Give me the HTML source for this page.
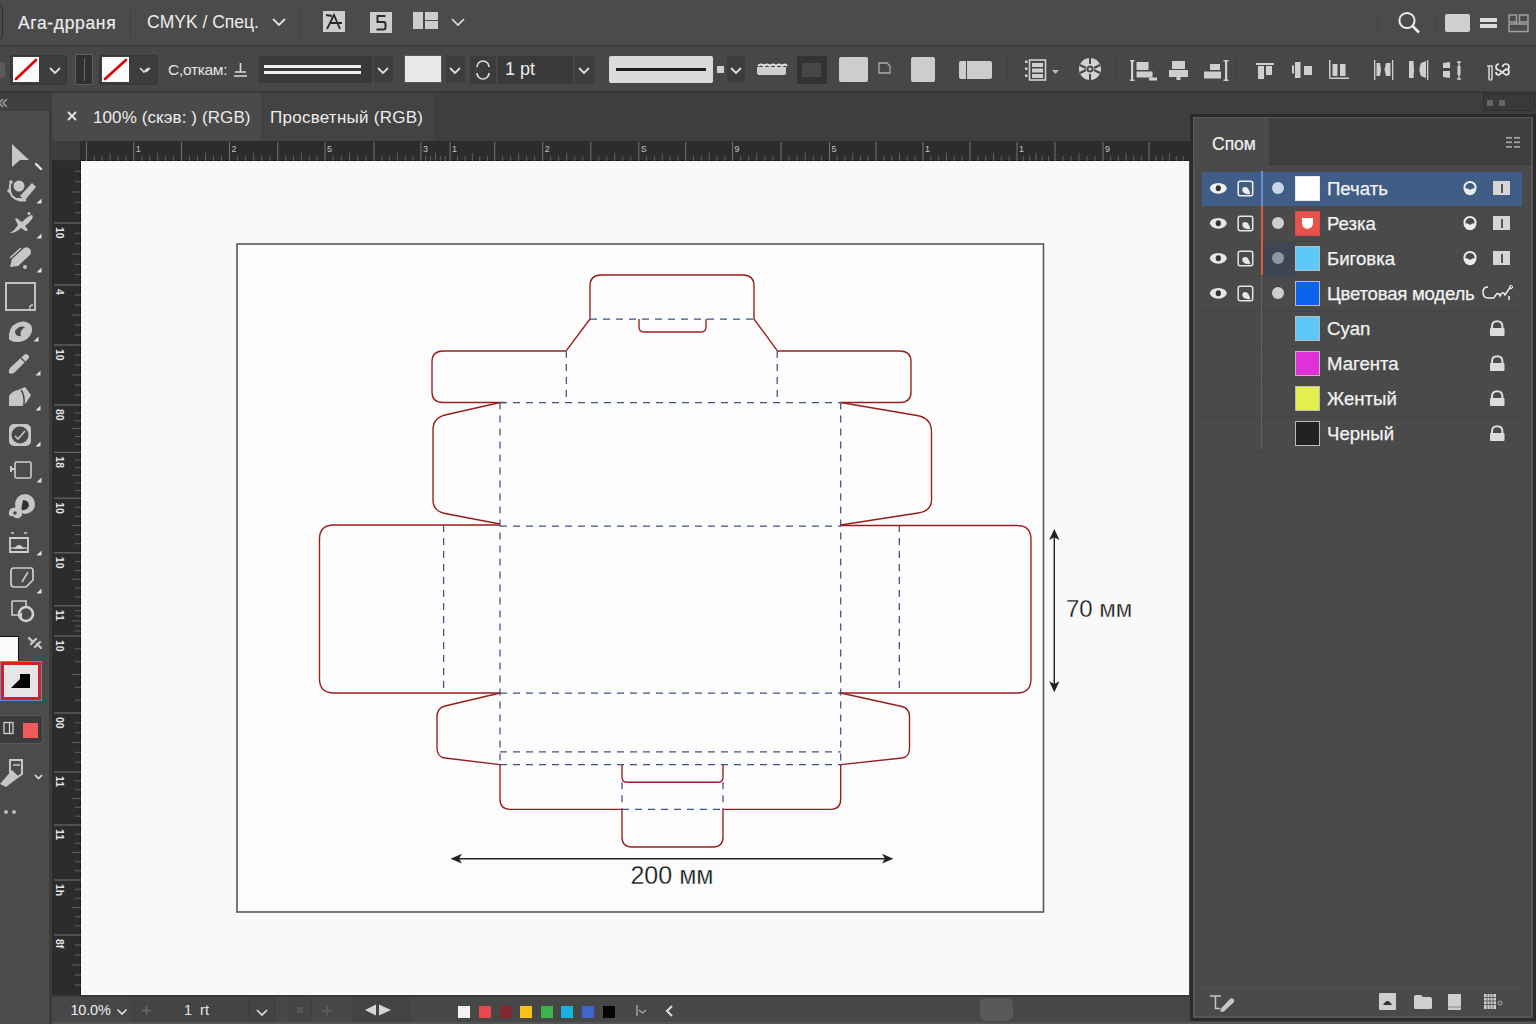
<!DOCTYPE html>
<html><head><meta charset="utf-8">
<style>
*{margin:0;padding:0;box-sizing:border-box}
html,body{width:1536px;height:1024px;overflow:hidden;background:#464646;font-family:"Liberation Sans",sans-serif;color:#e6e6e6}
.a{position:absolute}
#menubar{left:0;top:0;width:1536px;height:46px;background:#4b4b4b;border-bottom:1px solid #393939}
#ctrlbar{left:0;top:46px;width:1536px;height:47px;background:#474747;border-bottom:2px solid #383838}
#tabrow{left:52px;top:93px;width:1484px;height:48px;background:#3e3e3e}
#toolbar{left:0;top:93px;width:52px;height:931px;background:#4b4b4b;border-right:1px solid #3a3a3a}
#hruler{left:80px;top:141px;width:1110px;height:20px;background:#2c2c2c}
#rcorner{left:52px;top:141px;width:28px;height:20px;background:#3d3d3d;border-bottom:1px solid #303030}
#vruler{left:52px;top:161px;width:29px;height:834px;background:#2c2c2c}
#canvas{left:80px;top:160px;width:1109px;height:835px;background:#f9f9f9;border-left:1.5px solid #1c1c1c;border-top:1px solid #1c1c1c}
#status{left:52px;top:995px;width:1140px;height:29px;background:#474747}
#panel{left:1189.5px;top:114px;width:346px;height:907px;background:#4a4a4a;border:3px solid #2b2b2b;box-shadow:inset 0 0 0 2px #585858}
.t{position:absolute;white-space:nowrap}
</style></head><body>
<div id="menubar" class="a"></div>
<div id="ctrlbar" class="a"></div>
<!-- MENU BAR CONTENT -->
<div class="a" style="left:-6px;top:5px;width:9px;height:36px;border:1.5px solid #2f2f2f;border-radius:5px"></div>
<div class="t" style="left:18px;top:12.5px;font-size:17.5px;color:#ececec;letter-spacing:0.65px;-webkit-text-stroke:0.2px #ececec">Ага-дрраня</div>
<div class="a" style="left:130px;top:9px;width:1px;height:30px;background:#424242"></div>
<div class="t" style="left:147px;top:12px;font-size:17.5px;color:#ececec">CMYK / Спец.</div>
<svg class="a" style="left:271px;top:17px" width="16" height="10"><path d="M2,2 L8,8 L14,2" fill="none" stroke="#e0e0e0" stroke-width="1.8"/></svg>
<div class="a" style="left:300px;top:9px;width:1px;height:30px;background:#424242"></div>
<div class="a" style="left:322.5px;top:11px;width:22.5px;height:21px;background:#cdcdcd"></div>
<svg class="a" style="left:322.5px;top:11px" width="23" height="21"><path d="M4,18 L11,4 L17,18 M7,12 L19,12 M3,4 L9,5" fill="none" stroke="#2a2a2a" stroke-width="1.8"/></svg>
<div class="a" style="left:370px;top:11.5px;width:22px;height:21px;background:#cdcdcd"></div>
<svg class="a" style="left:370px;top:11.5px" width="22" height="21"><path d="M15.5,4 H7.5 V10 H13.5 Q15.5,10 15.5,12 V15.5 Q15.5,17.5 13.5,17.5 H6.5" fill="none" stroke="#2a2a2a" stroke-width="2"/></svg>
<div class="a" style="left:413px;top:12px;width:10px;height:17px;background:#cdcdcd"></div>
<div class="a" style="left:425px;top:12px;width:12.5px;height:7.5px;background:#cdcdcd"></div>
<div class="a" style="left:425px;top:20.5px;width:12.5px;height:8.5px;background:#cdcdcd"></div>
<svg class="a" style="left:450px;top:17px" width="16" height="10"><path d="M2,2 L8,8 L14,2" fill="none" stroke="#e0e0e0" stroke-width="1.6"/></svg>
<div class="a" style="left:1377px;top:12px;width:1px;height:23px;background:#444"></div>
<svg class="a" style="left:1394px;top:8px" width="30" height="30"><circle cx="13" cy="12.5" r="7.6" fill="none" stroke="#ececec" stroke-width="2"/><path d="M18.5,18 L25,24.5" stroke="#ececec" stroke-width="2.6"/></svg>
<div class="a" style="left:1435px;top:12px;width:1px;height:23px;background:#444"></div>
<div class="a" style="left:1444.5px;top:13.5px;width:25.5px;height:18px;background:#cfcfcf;border-radius:2px"></div>
<div class="a" style="left:1480px;top:18px;width:17px;height:3.5px;background:#dcdcdc"></div>
<div class="a" style="left:1480px;top:24px;width:17px;height:3.5px;background:#dcdcdc"></div>
<svg class="a" style="left:1507px;top:13px" width="24" height="20"><path d="M2,2 H9.5 V9 H2 Z M12.5,2 H21 V9 H12.5 Z M2,11 H21 V18.5 H2 Z M9.5,9 V11 M12.5,9 V11" fill="none" stroke="#a0a0a0" stroke-width="1.5"/></svg>

<div id="toolbar" class="a"></div>
<!-- CONTROL BAR CONTENT -->
<div class="a" style="left:0;top:62px;width:5px;height:16px;background:#5a5a5a;border-radius:0 3px 3px 0"></div>
<div class="a" style="left:10px;top:55px;width:57px;height:30px;background:#3d3d3d;border:1px solid #373737;border-radius:2px"></div>
<div class="a" style="left:13px;top:57px;width:26px;height:25px;background:#fbfbfb"></div>
<svg class="a" style="left:13px;top:57px" width="26" height="25"><path d="M3,22 L23,3" stroke="#e00000" stroke-width="2.6" stroke-linecap="round"/></svg>
<svg class="a" style="left:48px;top:66px" width="14" height="9"><path d="M2,2 L7,7 L12,2" fill="none" stroke="#dedede" stroke-width="1.8"/></svg>
<div class="a" style="left:75px;top:54px;width:18px;height:31px;background:#2f2f2f;border:1px solid #5e5e5e"></div>
<div class="a" style="left:84px;top:58px;width:1px;height:23px;background:#6a6a6a"></div>
<div class="a" style="left:99px;top:55px;width:59px;height:30px;background:#3d3d3d;border:1px solid #373737;border-radius:2px"></div>
<div class="a" style="left:102px;top:57px;width:27px;height:25px;background:#fbfbfb"></div>
<svg class="a" style="left:102px;top:57px" width="27" height="25"><path d="M3,22 L24,3" stroke="#e00000" stroke-width="2.6" stroke-linecap="round"/></svg>
<svg class="a" style="left:138px;top:66px" width="16" height="9"><path d="M2,2 L6,6 L10,2 M8,6 L12,2" fill="none" stroke="#dedede" stroke-width="1.6"/></svg>
<div class="t" style="left:168px;top:61px;font-size:15.5px;color:#e4e4e4;letter-spacing:-0.3px">С,откам:</div>
<svg class="a" style="left:232px;top:61px" width="17" height="17"><path d="M8.5,2 V11 M3,11 H14 M2,15 H15" fill="none" stroke="#dcdcdc" stroke-width="1.6"/></svg>
<div class="a" style="left:259px;top:56px;width:112.5px;height:27px;background:#393939"></div>
<div class="a" style="left:264px;top:65px;width:97px;height:3px;background:#f0f0f0"></div>
<div class="a" style="left:264px;top:70.5px;width:97px;height:3px;background:#f0f0f0"></div>
<div class="a" style="left:374px;top:56px;width:18.5px;height:27px;background:#3d3d3d"></div>
<svg class="a" style="left:376px;top:66px" width="14" height="9"><path d="M2,2 L7,7 L12,2" fill="none" stroke="#dedede" stroke-width="1.8"/></svg>
<div class="a" style="left:404px;top:55px;width:38px;height:28px;background:#e8e8e8;border:1px solid #5a5a5a"></div>
<div class="a" style="left:446px;top:56px;width:19px;height:27px;background:#3d3d3d"></div>
<svg class="a" style="left:448px;top:66px" width="14" height="9"><path d="M2,2 L7,7 L12,2" fill="none" stroke="#dedede" stroke-width="1.8"/></svg>
<div class="a" style="left:470px;top:56px;width:25.5px;height:27.5px;background:#3c3c3c"></div>
<svg class="a" style="left:470px;top:56px" width="26" height="28"><path d="M7,11 A6,6 0 0 1 19,11 M7,17 A6,6 0 0 0 19,17" fill="none" stroke="#dcdcdc" stroke-width="1.7"/></svg>
<div class="a" style="left:498px;top:56px;width:75px;height:27.5px;background:#3a3a3a"></div>
<div class="t" style="left:505px;top:59px;font-size:18px;color:#ececec">1 pt</div>
<div class="a" style="left:575px;top:56px;width:19px;height:27.5px;background:#3d3d3d;border-radius:0 2px 2px 0"></div>
<svg class="a" style="left:577px;top:66px" width="14" height="9"><path d="M2,2 L7,7 L12,2" fill="none" stroke="#dedede" stroke-width="1.8"/></svg>
<div class="a" style="left:608.5px;top:56px;width:104.5px;height:27px;background:#dadada;border-radius:2px"></div>
<div class="a" style="left:616px;top:68px;width:90px;height:3px;background:#1e1e1e"></div>
<div class="a" style="left:717px;top:66px;width:7px;height:7px;background:#cfcfcf"></div>
<div class="a" style="left:727px;top:56px;width:18px;height:27px;background:#3c3c3c"></div>
<svg class="a" style="left:729px;top:66px" width="14" height="9"><path d="M2,2 L7,7 L12,2" fill="none" stroke="#dedede" stroke-width="1.8"/></svg>
<svg class="a" style="left:755px;top:61px" width="34" height="16"><path d="M2,6 H31 V12 Q31,14 29,14 H4 Q2,14 2,12 Z" fill="#cfcfcf"/><path d="M3,5 Q6,2 9,5 Q12,2 15,5 Q18,2 21,5 Q24,2 27,5 Q30,2 32,5" fill="none" stroke="#e6e6e6" stroke-width="2"/></svg>
<div class="a" style="left:796.5px;top:56px;width:30.5px;height:27.5px;background:#333333"></div>
<div class="a" style="left:802px;top:62.5px;width:19px;height:14.5px;background:#474747"></div>
<div class="a" style="left:839px;top:57px;width:29px;height:25px;background:#cdcdcd;border-radius:2px"></div>
<svg class="a" style="left:877px;top:61px" width="16" height="14"><path d="M2,2 H10 L13,5 V12 H2 Z" fill="none" stroke="#aaa" stroke-width="1.3"/></svg>
<div class="a" style="left:911px;top:57px;width:24px;height:25px;background:#cdcdcd;border-radius:2px"></div>
<div class="a" style="left:959px;top:60.5px;width:32.5px;height:18.5px;background:#cdcdcd;border-radius:2px"></div>
<div class="a" style="left:966px;top:61px;width:1.2px;height:18px;background:#474747"></div>
<div class="a" style="left:1006.5px;top:56px;width:1px;height:28px;background:#404040"></div>
<svg class="a" style="left:1024px;top:59px" width="38" height="23"><g fill="#cfcfcf"><rect x="1" y="1.5" width="2.5" height="2.5"/><rect x="1" y="8.5" width="2.5" height="2.5"/><rect x="1" y="15.5" width="2.5" height="2.5"/></g><rect x="5.5" y="1" width="16" height="20" fill="none" stroke="#cfcfcf" stroke-width="1.6"/><g fill="#cfcfcf"><rect x="8" y="4" width="11" height="4"/><rect x="8" y="9.5" width="11" height="4"/><rect x="8" y="15" width="11" height="4"/></g><path d="M28,11 L35,11 L31.5,15 Z" fill="#bdbdbd"/></svg>
<svg class="a" style="left:1078px;top:57px" width="24" height="24"><circle cx="12" cy="12" r="11" fill="#d2d2d2"/><g stroke="#474747" stroke-width="2" fill="none"><path d="M12,1 V7 M12,17 V23 M2,8 L8,11 M16,13 L22,16 M2,16 L8,13 M16,11 L22,8"/></g><circle cx="12" cy="12" r="3.5" fill="#474747"/><circle cx="12" cy="12" r="1.5" fill="#d2d2d2"/></svg>
<div class="a" style="left:1115.5px;top:58px;width:1px;height:24px;background:#404040"></div>
<svg class="a" style="left:1130px;top:59px" width="30" height="23"><g fill="#cfcfcf"><rect x="1" y="1" width="2.2" height="21"/><rect x="0" y="1" width="4.5" height="1.5"/><rect x="0" y="20.5" width="4.5" height="1.5"/><rect x="6.5" y="3" width="12" height="8"/><rect x="6.5" y="12.5" width="16" height="6"/><rect x="19" y="18.5" width="8" height="3"/></g></svg>
<svg class="a" style="left:1168px;top:60px" width="22" height="22"><g fill="#cfcfcf"><rect x="4" y="1" width="13" height="8"/><rect x="1" y="10" width="19" height="7"/><rect x="8.5" y="17" width="4" height="3"/></g></svg>
<svg class="a" style="left:1203px;top:59px" width="26" height="23"><g fill="#cfcfcf"><rect x="22" y="1" width="2.2" height="21"/><rect x="20.5" y="1" width="5" height="1.5"/><rect x="20.5" y="20.5" width="5" height="1.5"/><rect x="7" y="5" width="10" height="6"/><rect x="1" y="12.5" width="17" height="7"/></g></svg>
<div class="a" style="left:1236px;top:57px;width:1px;height:26px;background:#404040"></div>
<svg class="a" style="left:1256px;top:63px" width="20" height="17"><g fill="#cfcfcf"><rect x="0" y="0" width="18" height="2"/><rect x="2" y="3" width="6" height="13"/><rect x="10" y="3" width="6" height="9"/></g></svg>
<svg class="a" style="left:1292px;top:62px" width="22" height="17"><g fill="#cfcfcf"><rect x="0" y="3.5" width="2" height="8"/><rect x="3" y="0" width="5.5" height="16"/><rect x="12" y="4" width="8" height="9"/></g></svg>
<svg class="a" style="left:1328px;top:59px" width="22" height="21"><g fill="#cfcfcf"><rect x="1" y="1" width="1.5" height="17"/><rect x="1" y="18.5" width="20" height="1.5"/><rect x="4.5" y="5" width="5" height="12"/><rect x="12" y="5" width="5.5" height="12"/></g></svg>
<div class="a" style="left:1361.5px;top:58px;width:1px;height:24px;background:#404040"></div>
<svg class="a" style="left:1373px;top:59px" width="22" height="22"><g fill="#cfcfcf"><rect x="1" y="1" width="1.3" height="20"/><rect x="19" y="1" width="1.3" height="20"/><path d="M3.5,4 H7 L8,10.5 L7,17 H3.5 Z"/><path d="M17.5,4 H13 L11.5,10.5 L13,17 H17.5 Z"/></g></svg>
<svg class="a" style="left:1408px;top:59px" width="22" height="22"><g fill="#cfcfcf"><path d="M1,2 H5.5 Q6.5,10.5 5.5,19 H1 Z"/><path d="M18,2 L18,19 L13,17 Q10,10.5 13,4 Z"/><rect x="19" y="1" width="1.3" height="20"/></g></svg>
<svg class="a" style="left:1441px;top:60px" width="24" height="21"><g fill="#cfcfcf"><path d="M2,3 L9,2 V8 H2 Z"/><path d="M2,11 H9 V18 L2,17 Z"/></g><path d="M18,2 V19 M16,2 H20 M16,19 H20" fill="none" stroke="#cfcfcf" stroke-width="1.4"/><rect x="16.5" y="6" width="3" height="9" fill="#cfcfcf"/></svg>
<svg class="a" style="left:1484px;top:61px" width="28" height="20"><path d="M3,5 H8 V17 M5,5 V18 Q5,19 6.5,19 Q8,19 8,17" fill="none" stroke="#cfcfcf" stroke-width="1.6"/><path d="M15,3 Q12,3 12,6 Q12,9 15,9 L22,14 Q25,14 25,11 Q25,8 22,8 L15,14 Q12,14 12,11 M22,9 Q25,9 25,6 Q25,3 22,3 Q19,3 18.5,6" fill="none" stroke="#e6e6e6" stroke-width="1.7"/></svg>


<!-- TOOLBAR CONTENT -->
<div class="a" style="left:49px;top:111px;width:3px;height:913px;background:#3c3c3c"></div>
<svg class="a" style="left:10px;top:142px" width="22" height="28"><path d="M2,2 L19,18 L10,18 L2,25 Z" fill="#c6c6c6"/></svg>
<svg class="a" style="left:35px;top:163px" width="8" height="7"><path d="M1,1 L6,6" stroke="#e6e6e6" stroke-width="2.4" stroke-linecap="round"/></svg>
<svg class="a" style="left:6px;top:178px" width="32" height="26"><circle cx="13" cy="8" r="5.5" fill="#c6c6c6"/><path d="M14,18 L26,5 L30,9 L19,22 Z" fill="#c6c6c6"/><path d="M5,4 Q2,12 6,18 Q12,24 20,22" fill="none" stroke="#c6c6c6" stroke-width="2"/><circle cx="5" cy="4" r="1.8" fill="#c6c6c6"/><circle cx="3" cy="13" r="1.8" fill="#c6c6c6"/><path d="M10,20 Q15,24 21,20 Z" fill="#c6c6c6"/></svg>
<svg class="a" style="left:36px;top:198px" width="6" height="6"><path d="M5.5,0.5 V5.5 H0.5 Z" fill="#e0e0e0"/></svg>
<svg class="a" style="left:9px;top:211px" width="26" height="25"><path d="M1,22 Q6,19 9,14 L6,8 Q8,6 10,9 L13,11 Q18,6 22,4 Q25,4 23,8 Q20,12 16,15 L19,19 Q17,21 15,19 L12,17 Q7,22 1,22 Z" fill="#c6c6c6"/><circle cx="20" cy="2.5" r="1.5" fill="#c6c6c6"/></svg>
<svg class="a" style="left:36px;top:233px" width="6" height="6"><path d="M5.5,0.5 V5.5 H0.5 Z" fill="#e0e0e0"/></svg>
<svg class="a" style="left:8px;top:245px" width="26" height="26"><path d="M2,22 L4,14 L16,3 Q19,1 22,4 Q24,7 22,10 L10,21 Z" fill="#c6c6c6"/><path d="M2,13 L13,3" stroke="#c6c6c6" stroke-width="1.6"/><circle cx="17" cy="22" r="2" fill="#c6c6c6"/></svg>
<svg class="a" style="left:36px;top:267px" width="6" height="6"><path d="M5.5,0.5 V5.5 H0.5 Z" fill="#e0e0e0"/></svg>
<svg class="a" style="left:5px;top:282px" width="32" height="30"><rect x="1" y="1" width="29" height="27" fill="none" stroke="#cfcfcf" stroke-width="1.8"/><path d="M25,27 Q24,23 28,23" fill="none" stroke="#cfcfcf" stroke-width="1.3"/></svg>
<svg class="a" style="left:7px;top:317px" width="30" height="28"><path d="M2,22 Q1,10 10,6 Q18,2 24,8 Q27,14 22,20 Q18,25 10,25 Q4,25 2,22 Z" fill="#c6c6c6"/><path d="M8,14 Q12,8 18,10 Q12,14 14,19 Q8,20 8,14 Z" fill="#484848"/></svg>
<svg class="a" style="left:33px;top:336px" width="6" height="6"><path d="M5.5,0.5 V5.5 H0.5 Z" fill="#e0e0e0"/></svg>
<svg class="a" style="left:7px;top:352px" width="24" height="24"><path d="M2,21 Q1,18 4,15 L17,3 Q19,1 21,3 Q23,5 21,7 L8,20 Q5,23 2,21 Z" fill="#c6c6c6"/><path d="M14,6 L18,10" stroke="#484848" stroke-width="1.3"/></svg>
<svg class="a" style="left:35px;top:370px" width="6" height="6"><path d="M5.5,0.5 V5.5 H0.5 Z" fill="#e0e0e0"/></svg>
<svg class="a" style="left:8px;top:386px" width="24" height="22"><path d="M1,20 V10 Q4,5 10,4 L17,1 L23,9 L18,17 L14,20 Z" fill="#c6c6c6"/><path d="M13,4 Q17,9 16,19" fill="none" stroke="#484848" stroke-width="1.5"/></svg>
<svg class="a" style="left:35px;top:405px" width="6" height="6"><path d="M5.5,0.5 V5.5 H0.5 Z" fill="#e0e0e0"/></svg>
<svg class="a" style="left:8px;top:423px" width="24" height="24"><rect x="1" y="1" width="22" height="22" rx="5" fill="#c6c6c6"/><circle cx="12" cy="12" r="8.5" fill="#484848"/><path d="M7,13 L10,16 L17,8" fill="none" stroke="#c6c6c6" stroke-width="1.6"/></svg>
<svg class="a" style="left:35px;top:441px" width="6" height="6"><path d="M5.5,0.5 V5.5 H0.5 Z" fill="#e0e0e0"/></svg>
<svg class="a" style="left:8px;top:460px" width="26" height="22"><rect x="7" y="2" width="16" height="16" rx="1.5" fill="none" stroke="#cfcfcf" stroke-width="1.6"/><path d="M2,9 H7 M3,6 V12" stroke="#cfcfcf" stroke-width="1.8"/></svg>
<svg class="a" style="left:36px;top:477px" width="6" height="6"><path d="M5.5,0.5 V5.5 H0.5 Z" fill="#e0e0e0"/></svg>
<svg class="a" style="left:7px;top:492px" width="30" height="28"><circle cx="18" cy="12" r="10" fill="#c6c6c6"/><path d="M16,8 Q22,8 22,14 Q20,19 14,18 Z" fill="#333"/><path d="M2,20 Q3,15 8,16 Q9,12 13,14 Q16,16 14,20 Q17,24 12,26 Q8,27 6,24 Q1,25 2,20 Z" fill="#c6c6c6"/><circle cx="8" cy="21" r="1.8" fill="#484848"/></svg>
<svg class="a" style="left:8px;top:530px" width="24" height="24"><path d="M2,8 H20 V22 H2 Z" fill="none" stroke="#cfcfcf" stroke-width="1.8"/><path d="M3,3 H6 M16,3 H19" stroke="#cfcfcf" stroke-width="1.5"/><path d="M6,19 Q11,11 16,19 Z" fill="#cfcfcf"/><path d="M3,18 H19" stroke="#cfcfcf" stroke-width="1.3"/></svg>
<svg class="a" style="left:36px;top:550px" width="6" height="6"><path d="M5.5,0.5 V5.5 H0.5 Z" fill="#e0e0e0"/></svg>
<svg class="a" style="left:9px;top:566px" width="26" height="23"><path d="M2,5 Q2,2 5,2 H22 Q24,2 24,5 V14 L17,21 H5 Q2,21 2,18 Z" fill="none" stroke="#cfcfcf" stroke-width="1.7"/><path d="M13,16 L19,6" stroke="#cfcfcf" stroke-width="1.5"/></svg>
<svg class="a" style="left:36px;top:588px" width="6" height="6"><path d="M5.5,0.5 V5.5 H0.5 Z" fill="#e0e0e0"/></svg>
<svg class="a" style="left:10px;top:599px" width="26" height="24"><path d="M2,2 H16 V9 M2,2 V16 H8" fill="none" stroke="#cfcfcf" stroke-width="1.6"/><circle cx="16" cy="15" r="7" fill="none" stroke="#cfcfcf" stroke-width="2.6"/><path d="M8,17 L12,13 L12,20 Z" fill="#cfcfcf"/></svg>
<svg class="a" style="left:27px;top:636px" width="16" height="14"><path d="M2,2 L6,6 M10,8 L14,12 M9,3 L4,8 M13,6 L8,11" stroke="#c6c6c6" stroke-width="2.4" stroke-linecap="round"/></svg>
<div class="a" style="left:-2px;top:636px;width:21px;height:34px;background:#fbfbfb;border:1.5px solid #111"></div>
<div class="a" style="left:0px;top:660.5px;width:41.5px;height:40.5px;background:#d32020;border:1px solid #5a8fd8"></div>
<div class="a" style="left:4px;top:664.5px;width:33.5px;height:32.5px;background:#e6e6e6"></div>
<svg class="a" style="left:9px;top:671px" width="24" height="20"><path d="M2,17 L11,8 L11,3 L21,3 L21,17 Z" fill="#050505"/></svg>
<div class="a" style="left:-2px;top:715px;width:44.5px;height:28.5px;background:#3b3b3b;border:1px solid #5a5a5a;border-radius:2px"></div>
<svg class="a" style="left:3px;top:721px" width="12" height="14"><rect x="1" y="1.5" width="9" height="11" fill="none" stroke="#cfcfcf" stroke-width="1.3"/><path d="M6.5,1.5 V12.5" stroke="#cfcfcf" stroke-width="1.3"/></svg>
<div class="a" style="left:23px;top:723px;width:14.5px;height:14.5px;background:#ee5b5b"></div>
<svg class="a" style="left:0px;top:756px" width="26" height="32"><path d="M0,28 L12,14 L19,21 L6,31 Z" fill="#c6c6c6"/><path d="M10,4 H22 V18 L16,22 L10,16 Z" fill="none" stroke="#c6c6c6" stroke-width="2"/><path d="M13,9 H20" stroke="#c6c6c6" stroke-width="1.5"/></svg>
<svg class="a" style="left:34px;top:774px" width="9" height="6"><path d="M1,1 L4.5,4.5 L8,1" fill="none" stroke="#ddd" stroke-width="1.6"/></svg>
<div class="a" style="left:4px;top:810px;width:4px;height:4px;border-radius:50%;background:#bbb"></div>
<div class="a" style="left:12px;top:810px;width:4px;height:4px;border-radius:50%;background:#bbb"></div>

<div id="tabrow" class="a"></div>
<!-- TAB ROW CONTENT -->
<div class="a" style="left:0;top:93px;width:52px;height:18px;background:#3f3f3f"></div>
<svg class="a" style="left:-4px;top:97px" width="12" height="12"><path d="M7,2 L3,6 L7,10 M11,2 L7,6 L11,10" fill="none" stroke="#999" stroke-width="1.6"/></svg>
<div class="a" style="left:52px;top:93px;width:209px;height:48px;background:#4a4a4a"></div>
<div class="a" style="left:261px;top:93px;width:173px;height:48px;background:#434343"></div>
<svg class="a" style="left:66px;top:110px" width="12" height="12"><path d="M2,2 L10,10 M10,2 L2,10" stroke="#e8e8e8" stroke-width="1.8"/></svg>
<div class="t" style="left:93px;top:108px;font-size:17px;color:#ececec;letter-spacing:0.1px">100% (скэв: ) (RGB)</div>
<div class="t" style="left:270px;top:108px;font-size:17px;color:#ececec;letter-spacing:0.25px">Просветный (RGB)</div>
<div class="a" style="left:1483px;top:93px;width:51.5px;height:18px;background:#393939;border:1px solid #2f2f2f;border-radius:0 0 4px 0"></div>
<div class="a" style="left:1487px;top:100px;width:6px;height:6px;background:#666"></div>
<div class="a" style="left:1499px;top:100px;width:6px;height:6px;background:#666"></div>

<div id="rcorner" class="a"></div>
<div id="hruler" class="a"></div>
<div id="vruler" class="a"></div>
<div id="canvas" class="a"></div>
<svg class="a" style="left:0;top:0" width="1536" height="1024"><g stroke="#757575" stroke-width="1">
<path d="M86.4,142 V161"/>
<path d="M94.3,156 V161" stroke="#606060"/>
<path d="M102.2,156 V161" stroke="#606060"/>
<path d="M110.1,153 V161" stroke="#606060"/>
<path d="M118.0,156 V161" stroke="#606060"/>
<path d="M125.9,156 V161" stroke="#606060"/>
<path d="M133.8,142 V161"/>
<path d="M141.8,156 V161" stroke="#606060"/>
<path d="M149.7,156 V161" stroke="#606060"/>
<path d="M157.7,153 V161" stroke="#606060"/>
<path d="M165.6,156 V161" stroke="#606060"/>
<path d="M173.6,156 V161" stroke="#606060"/>
<path d="M181.5,142 V161"/>
<path d="M189.5,156 V161" stroke="#606060"/>
<path d="M197.5,156 V161" stroke="#606060"/>
<path d="M205.5,153 V161" stroke="#606060"/>
<path d="M213.5,156 V161" stroke="#606060"/>
<path d="M221.5,156 V161" stroke="#606060"/>
<path d="M229.5,142 V161"/>
<path d="M237.6,156 V161" stroke="#606060"/>
<path d="M245.6,156 V161" stroke="#606060"/>
<path d="M253.7,153 V161" stroke="#606060"/>
<path d="M261.7,156 V161" stroke="#606060"/>
<path d="M269.8,156 V161" stroke="#606060"/>
<path d="M277.8,142 V161"/>
<path d="M285.7,156 V161" stroke="#606060"/>
<path d="M293.5,156 V161" stroke="#606060"/>
<path d="M301.4,153 V161" stroke="#606060"/>
<path d="M309.3,156 V161" stroke="#606060"/>
<path d="M317.1,156 V161" stroke="#606060"/>
<path d="M325.0,142 V161"/>
<path d="M333.2,156 V161" stroke="#606060"/>
<path d="M341.3,156 V161" stroke="#606060"/>
<path d="M349.5,153 V161" stroke="#606060"/>
<path d="M357.7,156 V161" stroke="#606060"/>
<path d="M365.8,156 V161" stroke="#606060"/>
<path d="M374.0,142 V161"/>
<path d="M381.8,156 V161" stroke="#606060"/>
<path d="M389.6,156 V161" stroke="#606060"/>
<path d="M397.4,153 V161" stroke="#606060"/>
<path d="M405.3,156 V161" stroke="#606060"/>
<path d="M413.1,156 V161" stroke="#606060"/>
<path d="M420.9,142 V161"/>
<path d="M425.8,156 V161" stroke="#606060"/>
<path d="M430.6,156 V161" stroke="#606060"/>
<path d="M435.5,153 V161" stroke="#606060"/>
<path d="M440.4,156 V161" stroke="#606060"/>
<path d="M445.2,156 V161" stroke="#606060"/>
<path d="M450.1,142 V161"/>
<path d="M457.5,156 V161" stroke="#606060"/>
<path d="M465.0,156 V161" stroke="#606060"/>
<path d="M472.4,153 V161" stroke="#606060"/>
<path d="M479.8,156 V161" stroke="#606060"/>
<path d="M487.3,156 V161" stroke="#606060"/>
<path d="M494.7,142 V161"/>
<path d="M502.7,156 V161" stroke="#606060"/>
<path d="M510.7,156 V161" stroke="#606060"/>
<path d="M518.7,153 V161" stroke="#606060"/>
<path d="M526.7,156 V161" stroke="#606060"/>
<path d="M534.7,156 V161" stroke="#606060"/>
<path d="M542.7,142 V161"/>
<path d="M550.7,156 V161" stroke="#606060"/>
<path d="M558.7,156 V161" stroke="#606060"/>
<path d="M566.8,153 V161" stroke="#606060"/>
<path d="M574.8,156 V161" stroke="#606060"/>
<path d="M582.8,156 V161" stroke="#606060"/>
<path d="M590.8,142 V161"/>
<path d="M598.8,156 V161" stroke="#606060"/>
<path d="M606.8,156 V161" stroke="#606060"/>
<path d="M614.8,153 V161" stroke="#606060"/>
<path d="M622.8,156 V161" stroke="#606060"/>
<path d="M630.8,156 V161" stroke="#606060"/>
<path d="M638.8,142 V161"/>
<path d="M646.6,156 V161" stroke="#606060"/>
<path d="M654.4,156 V161" stroke="#606060"/>
<path d="M662.2,153 V161" stroke="#606060"/>
<path d="M670.1,156 V161" stroke="#606060"/>
<path d="M677.9,156 V161" stroke="#606060"/>
<path d="M685.7,142 V161"/>
<path d="M693.5,156 V161" stroke="#606060"/>
<path d="M701.3,156 V161" stroke="#606060"/>
<path d="M709.2,153 V161" stroke="#606060"/>
<path d="M717.0,156 V161" stroke="#606060"/>
<path d="M724.8,156 V161" stroke="#606060"/>
<path d="M732.6,142 V161"/>
<path d="M740.7,156 V161" stroke="#606060"/>
<path d="M748.7,156 V161" stroke="#606060"/>
<path d="M756.8,153 V161" stroke="#606060"/>
<path d="M764.9,156 V161" stroke="#606060"/>
<path d="M772.9,156 V161" stroke="#606060"/>
<path d="M781.0,142 V161"/>
<path d="M789.1,156 V161" stroke="#606060"/>
<path d="M797.2,156 V161" stroke="#606060"/>
<path d="M805.2,153 V161" stroke="#606060"/>
<path d="M813.3,156 V161" stroke="#606060"/>
<path d="M821.4,156 V161" stroke="#606060"/>
<path d="M829.5,142 V161"/>
<path d="M837.2,156 V161" stroke="#606060"/>
<path d="M845.0,156 V161" stroke="#606060"/>
<path d="M852.8,153 V161" stroke="#606060"/>
<path d="M860.5,156 V161" stroke="#606060"/>
<path d="M868.2,156 V161" stroke="#606060"/>
<path d="M876.0,142 V161"/>
<path d="M883.8,156 V161" stroke="#606060"/>
<path d="M891.7,156 V161" stroke="#606060"/>
<path d="M899.5,153 V161" stroke="#606060"/>
<path d="M907.3,156 V161" stroke="#606060"/>
<path d="M915.2,156 V161" stroke="#606060"/>
<path d="M923.0,142 V161"/>
<path d="M930.8,156 V161" stroke="#606060"/>
<path d="M938.7,156 V161" stroke="#606060"/>
<path d="M946.5,153 V161" stroke="#606060"/>
<path d="M954.3,156 V161" stroke="#606060"/>
<path d="M962.2,156 V161" stroke="#606060"/>
<path d="M970.0,142 V161"/>
<path d="M977.8,156 V161" stroke="#606060"/>
<path d="M985.7,156 V161" stroke="#606060"/>
<path d="M993.5,153 V161" stroke="#606060"/>
<path d="M1001.3,156 V161" stroke="#606060"/>
<path d="M1009.2,156 V161" stroke="#606060"/>
<path d="M1017.0,142 V161"/>
<path d="M1023.3,156 V161" stroke="#606060"/>
<path d="M1029.7,156 V161" stroke="#606060"/>
<path d="M1036.0,153 V161" stroke="#606060"/>
<path d="M1042.3,156 V161" stroke="#606060"/>
<path d="M1048.7,156 V161" stroke="#606060"/>
<path d="M1055.0,142 V161"/>
<path d="M1063.0,156 V161" stroke="#606060"/>
<path d="M1071.0,156 V161" stroke="#606060"/>
<path d="M1079.0,153 V161" stroke="#606060"/>
<path d="M1087.0,156 V161" stroke="#606060"/>
<path d="M1095.0,156 V161" stroke="#606060"/>
<path d="M1103.0,142 V161"/>
<path d="M1110.7,156 V161" stroke="#606060"/>
<path d="M1118.3,156 V161" stroke="#606060"/>
<path d="M1126.0,153 V161" stroke="#606060"/>
<path d="M1133.7,156 V161" stroke="#606060"/>
<path d="M1141.3,156 V161" stroke="#606060"/>
<path d="M1149.0,142 V161"/>
<path d="M1155.8,156 V161" stroke="#606060"/>
<path d="M1162.7,156 V161" stroke="#606060"/>
<path d="M1169.5,153 V161" stroke="#606060"/>
<path d="M1176.3,156 V161" stroke="#606060"/>
<path d="M1183.2,156 V161" stroke="#606060"/>
</g><g fill="#c4c4c4" font-family="Liberation Sans" font-size="9">
<text x="135.8" y="152">1</text>
<text x="231.5" y="152">2</text>
<text x="327.0" y="152">5</text>
<text x="422.9" y="152">3</text>
<text x="452.1" y="152">1</text>
<text x="544.7" y="152">2</text>
<text x="640.8" y="152">S</text>
<text x="734.6" y="152">9</text>
<text x="831.5" y="152">5</text>
<text x="925.0" y="152">1</text>
<text x="1019.0" y="152">1</text>
<text x="1105.0" y="152">9</text>
</g>
<g stroke="#757575" stroke-width="1">
<path d="M75,171.3 H81" stroke="#606060"/>
<path d="M75,181.7 H81" stroke="#606060"/>
<path d="M72,192.0 H81" stroke="#606060"/>
<path d="M75,202.3 H81" stroke="#606060"/>
<path d="M75,212.7 H81" stroke="#606060"/>
<path d="M54,223.0 H81"/>
<path d="M75,233.3 H81" stroke="#606060"/>
<path d="M75,243.7 H81" stroke="#606060"/>
<path d="M72,254.0 H81" stroke="#606060"/>
<path d="M75,264.3 H81" stroke="#606060"/>
<path d="M75,274.7 H81" stroke="#606060"/>
<path d="M54,285.0 H81"/>
<path d="M75,295.0 H81" stroke="#606060"/>
<path d="M75,305.0 H81" stroke="#606060"/>
<path d="M72,315.0 H81" stroke="#606060"/>
<path d="M75,325.0 H81" stroke="#606060"/>
<path d="M75,335.0 H81" stroke="#606060"/>
<path d="M54,345.0 H81"/>
<path d="M75,355.0 H81" stroke="#606060"/>
<path d="M75,365.0 H81" stroke="#606060"/>
<path d="M72,375.0 H81" stroke="#606060"/>
<path d="M75,385.0 H81" stroke="#606060"/>
<path d="M75,395.0 H81" stroke="#606060"/>
<path d="M54,405.0 H81"/>
<path d="M75,412.9 H81" stroke="#606060"/>
<path d="M75,420.8 H81" stroke="#606060"/>
<path d="M72,428.6 H81" stroke="#606060"/>
<path d="M75,436.5 H81" stroke="#606060"/>
<path d="M75,444.4 H81" stroke="#606060"/>
<path d="M54,452.3 H81"/>
<path d="M75,459.9 H81" stroke="#606060"/>
<path d="M75,467.6 H81" stroke="#606060"/>
<path d="M72,475.2 H81" stroke="#606060"/>
<path d="M75,482.9 H81" stroke="#606060"/>
<path d="M75,490.6 H81" stroke="#606060"/>
<path d="M54,498.2 H81"/>
<path d="M75,507.3 H81" stroke="#606060"/>
<path d="M75,516.4 H81" stroke="#606060"/>
<path d="M72,525.5 H81" stroke="#606060"/>
<path d="M75,534.6 H81" stroke="#606060"/>
<path d="M75,543.7 H81" stroke="#606060"/>
<path d="M54,552.8 H81"/>
<path d="M75,561.6 H81" stroke="#606060"/>
<path d="M75,570.5 H81" stroke="#606060"/>
<path d="M72,579.3 H81" stroke="#606060"/>
<path d="M75,588.1 H81" stroke="#606060"/>
<path d="M75,597.0 H81" stroke="#606060"/>
<path d="M54,605.8 H81"/>
<path d="M75,610.8 H81" stroke="#606060"/>
<path d="M75,615.9 H81" stroke="#606060"/>
<path d="M72,620.9 H81" stroke="#606060"/>
<path d="M75,625.9 H81" stroke="#606060"/>
<path d="M75,631.0 H81" stroke="#606060"/>
<path d="M54,636.0 H81"/>
<path d="M75,648.8 H81" stroke="#606060"/>
<path d="M75,661.7 H81" stroke="#606060"/>
<path d="M72,674.5 H81" stroke="#606060"/>
<path d="M75,687.3 H81" stroke="#606060"/>
<path d="M75,700.2 H81" stroke="#606060"/>
<path d="M54,713.0 H81"/>
<path d="M75,722.8 H81" stroke="#606060"/>
<path d="M75,732.7 H81" stroke="#606060"/>
<path d="M72,742.5 H81" stroke="#606060"/>
<path d="M75,752.3 H81" stroke="#606060"/>
<path d="M75,762.2 H81" stroke="#606060"/>
<path d="M54,772.0 H81"/>
<path d="M75,780.8 H81" stroke="#606060"/>
<path d="M75,789.7 H81" stroke="#606060"/>
<path d="M72,798.5 H81" stroke="#606060"/>
<path d="M75,807.3 H81" stroke="#606060"/>
<path d="M75,816.2 H81" stroke="#606060"/>
<path d="M54,825.0 H81"/>
<path d="M75,834.2 H81" stroke="#606060"/>
<path d="M75,843.3 H81" stroke="#606060"/>
<path d="M72,852.5 H81" stroke="#606060"/>
<path d="M75,861.7 H81" stroke="#606060"/>
<path d="M75,870.8 H81" stroke="#606060"/>
<path d="M54,880.0 H81"/>
<path d="M75,889.2 H81" stroke="#606060"/>
<path d="M75,898.3 H81" stroke="#606060"/>
<path d="M72,907.5 H81" stroke="#606060"/>
<path d="M75,916.7 H81" stroke="#606060"/>
<path d="M75,925.8 H81" stroke="#606060"/>
<path d="M54,935.0 H81"/>
<path d="M75,945.0 H81" stroke="#606060"/>
<path d="M75,955.0 H81" stroke="#606060"/>
<path d="M72,965.0 H81" stroke="#606060"/>
<path d="M75,975.0 H81" stroke="#606060"/>
<path d="M75,985.0 H81" stroke="#606060"/>
</g><g fill="#e6e6e6" font-family="Liberation Sans" font-size="10.5" font-weight="bold">
<text transform="translate(56,227.0) rotate(90)">10</text>
<text transform="translate(56,289.0) rotate(90)">4</text>
<text transform="translate(56,349.0) rotate(90)">10</text>
<text transform="translate(56,409.0) rotate(90)">80</text>
<text transform="translate(56,456.3) rotate(90)">18</text>
<text transform="translate(56,502.2) rotate(90)">10</text>
<text transform="translate(56,556.8) rotate(90)">10</text>
<text transform="translate(56,609.8) rotate(90)">11</text>
<text transform="translate(56,640.0) rotate(90)">10</text>
<text transform="translate(56,717.0) rotate(90)">00</text>
<text transform="translate(56,776.0) rotate(90)">11</text>
<text transform="translate(56,829.0) rotate(90)">11</text>
<text transform="translate(56,884.0) rotate(90)">1h</text>
<text transform="translate(56,939.0) rotate(90)">8f</text>
</g></svg>
<div id="status" class="a"></div>

<!-- STATUS BAR -->
<div class="a" style="left:52px;top:995px;width:1140px;height:1.5px;background:#3a3a3a"></div>
<div class="a" style="left:53px;top:997px;width:81px;height:25px;background:#474747;border-right:1px solid #3e3e3e"></div>
<div class="t" style="left:70.5px;top:1002px;font-size:14.5px;color:#ececec;letter-spacing:-0.2px">10.0%</div>
<svg class="a" style="left:116px;top:1008px" width="12" height="8"><path d="M1.5,1.5 L6,6 L10.5,1.5" fill="none" stroke="#dedede" stroke-width="1.6"/></svg>
<div class="a" style="left:134px;top:997px;width:115px;height:25px;background:#444;border-right:1px solid #3e3e3e"></div>
<svg class="a" style="left:141px;top:1005px" width="11" height="11"><path d="M5.5,1 V10 M1,5.5 H10" stroke="#6a6a6a" stroke-width="1.4"/></svg>
<div class="t" style="left:184px;top:1002px;font-size:14.5px;color:#e6e6e6">1&nbsp;&nbsp;rt</div>
<div class="a" style="left:249px;top:997px;width:25.5px;height:25px;background:#434343;border-right:1px solid #3d3d3d"></div>
<svg class="a" style="left:255px;top:1008px" width="14" height="9"><path d="M2,2 L7,7 L12,2" fill="none" stroke="#dedede" stroke-width="1.6"/></svg>
<div class="a" style="left:288px;top:998px;width:24px;height:23px;background:#444;border-right:1px solid #3d3d3d"></div>
<div class="a" style="left:297px;top:1007px;width:6px;height:6px;background:#555"></div>
<svg class="a" style="left:321px;top:1005px" width="12" height="12"><path d="M6,1 V11 M1,6 H11" stroke="#5f5f5f" stroke-width="1.5"/></svg>
<div class="a" style="left:352px;top:997px;width:58px;height:25px;background:#434343"></div>
<svg class="a" style="left:364px;top:1003px" width="28" height="14"><path d="M1,7 L12,1.5 V12.5 Z M27,7 L15,1.5 V12.5 Z" fill="#d6d6d6"/></svg>
<div class="a" style="left:458px;top:1005.5px;width:12px;height:12px;background:#f2f2f2"></div>
<div class="a" style="left:479px;top:1005.5px;width:11.5px;height:12px;background:#e8474f"></div>
<div class="a" style="left:500px;top:1005.5px;width:11.5px;height:12px;background:#7e2a2e"></div>
<div class="a" style="left:520px;top:1005.5px;width:12px;height:12px;background:#f7c21a"></div>
<div class="a" style="left:541px;top:1005.5px;width:12px;height:12px;background:#3bb54a"></div>
<div class="a" style="left:561px;top:1005.5px;width:12px;height:12px;background:#19b2e0"></div>
<div class="a" style="left:582px;top:1005.5px;width:12px;height:12px;background:#3f66cc"></div>
<div class="a" style="left:603px;top:1005.5px;width:11.5px;height:12px;background:#050505"></div>
<svg class="a" style="left:636px;top:1004px" width="12" height="14"><path d="M1,1 V12 M3,6 L6.5,9 L10,6" fill="none" stroke="#aaa" stroke-width="1.3"/></svg>
<svg class="a" style="left:664px;top:1004px" width="10" height="14"><path d="M8,2 L3,7 L8,12" fill="none" stroke="#ddd" stroke-width="2"/></svg>
<div class="a" style="left:980px;top:998px;width:33px;height:23px;background:#595959;border-radius:6px"></div>
<div class="a" style="left:52px;top:1022px;width:1484px;height:2px;background:#555"></div>

<div id="panel" class="a"></div>
<!-- PANEL CONTENT -->
<div class="a" style="left:1194px;top:118px;width:337px;height:47px;background:#3f3f3f;border-bottom:1px solid #363636"></div>
<div class="a" style="left:1194px;top:118px;width:75px;height:47px;background:#4a4a4a"></div>
<div class="t" style="left:1212px;top:133.5px;font-size:17.5px;color:#f0f0f0;-webkit-text-stroke:0.2px #f0f0f0">Спом</div>
<svg class="a" style="left:1506px;top:137px" width="16" height="12"><g fill="#aaa"><rect x="0" y="0" width="6" height="1.6"/><rect x="8" y="0" width="6" height="1.6"/><rect x="0" y="4.5" width="6" height="1.6"/><rect x="8" y="4.5" width="6" height="1.6"/><rect x="0" y="9" width="6" height="1.6"/><rect x="8" y="9" width="6" height="1.6"/></g></svg>
<div class="a" style="left:1202px;top:172px;width:320px;height:34px;background:#3f5d86"></div>
<svg class="a" style="left:1209px;top:180px" width="19" height="16"><ellipse cx="9.3" cy="8.3" rx="8.4" ry="5.4" fill="#f0f0f0"/><ellipse cx="9.3" cy="8.3" rx="2.6" ry="3" fill="#333"/></svg>
<svg class="a" style="left:1237px;top:180px" width="18" height="18"><rect x="1.2" y="1.2" width="14.5" height="14.5" rx="2" fill="none" stroke="#f0f0f0" stroke-width="1.5"/><path d="M5.5,8 Q9,6 11,8.5 Q13,11 13.3,14 Q9,14.5 7,13 Q4.5,10.5 5.5,8 Z" fill="#f0f0f0"/></svg>
<div class="a" style="left:1272px;top:181.5px;width:12px;height:12px;border-radius:50%;background:#c8d6e8"></div>
<div class="a" style="left:1295px;top:176px;width:24.5px;height:24.5px;background:#ffffff;border:1px solid #e8e8e8"></div>
<div class="t" style="left:1327px;top:178px;font-size:18.6px;color:#f2f2f2;-webkit-text-stroke:0.25px #f2f2f2">Печать</div>
<svg class="a" style="left:1462.5px;top:180px" width="16" height="17"><circle cx="7" cy="7.5" r="5.6" fill="none" stroke="#ececec" stroke-width="2"/><path d="M0.8,9 Q4,7 7,10 Q10,7 13.2,9 A6.2,6.2 0 0 1 0.8,9 Z" fill="#ececec"/></svg>
<div class="a" style="left:1493px;top:181px;width:17px;height:14px;background:#d6d6d6"></div>
<div class="a" style="left:1501px;top:184px;width:1.6px;height:9px;background:#555"></div>
<div class="a" style="left:1200px;top:241px;width:321px;height:1px;background:#444"></div>
<svg class="a" style="left:1209px;top:215px" width="19" height="16"><ellipse cx="9.3" cy="8.3" rx="8.4" ry="5.4" fill="#e6e6e6"/><ellipse cx="9.3" cy="8.3" rx="2.6" ry="3" fill="#333"/></svg>
<svg class="a" style="left:1237px;top:215px" width="18" height="18"><rect x="1.2" y="1.2" width="14.5" height="14.5" rx="2" fill="none" stroke="#e6e6e6" stroke-width="1.5"/><path d="M5.5,8 Q9,6 11,8.5 Q13,11 13.3,14 Q9,14.5 7,13 Q4.5,10.5 5.5,8 Z" fill="#e6e6e6"/></svg>
<div class="a" style="left:1272px;top:216.5px;width:12px;height:12px;border-radius:50%;background:#cfcfcf"></div>
<div class="a" style="left:1295px;top:211px;width:24.5px;height:24.5px;background:#e8524a;border:1px solid #d45050"></div>
<svg class="a" style="left:1301px;top:217px" width="13" height="13"><path d="M1,1 H12 V6 Q12,11 6.5,12 Q1,11 1,6 Z" fill="#fff"/></svg>
<div class="t" style="left:1327px;top:213px;font-size:18.6px;color:#f2f2f2;-webkit-text-stroke:0.25px #f2f2f2">Резка</div>
<svg class="a" style="left:1462.5px;top:215px" width="16" height="17"><circle cx="7" cy="7.5" r="5.6" fill="none" stroke="#ececec" stroke-width="2"/><path d="M0.8,9 Q4,7 7,10 Q10,7 13.2,9 A6.2,6.2 0 0 1 0.8,9 Z" fill="#ececec"/></svg>
<div class="a" style="left:1493px;top:216px;width:17px;height:14px;background:#d6d6d6"></div>
<div class="a" style="left:1501px;top:219px;width:1.6px;height:9px;background:#555"></div>
<div class="a" style="left:1200px;top:276px;width:321px;height:1px;background:#444"></div>
<div class="a" style="left:1262px;top:242px;width:34px;height:34px;background:#3f4552"></div>
<svg class="a" style="left:1209px;top:250px" width="19" height="16"><ellipse cx="9.3" cy="8.3" rx="8.4" ry="5.4" fill="#e6e6e6"/><ellipse cx="9.3" cy="8.3" rx="2.6" ry="3" fill="#333"/></svg>
<svg class="a" style="left:1237px;top:250px" width="18" height="18"><rect x="1.2" y="1.2" width="14.5" height="14.5" rx="2" fill="none" stroke="#e6e6e6" stroke-width="1.5"/><path d="M5.5,8 Q9,6 11,8.5 Q13,11 13.3,14 Q9,14.5 7,13 Q4.5,10.5 5.5,8 Z" fill="#e6e6e6"/></svg>
<div class="a" style="left:1272px;top:251.5px;width:12px;height:12px;border-radius:50%;background:#8d98a8"></div>
<div class="a" style="left:1295px;top:246px;width:24.5px;height:24.5px;background:#5ec8f8;border:1px solid #bbb"></div>
<div class="t" style="left:1327px;top:248px;font-size:18.6px;color:#f2f2f2;-webkit-text-stroke:0.25px #f2f2f2">Биговка</div>
<svg class="a" style="left:1462.5px;top:250px" width="16" height="17"><circle cx="7" cy="7.5" r="5.6" fill="none" stroke="#ececec" stroke-width="2"/><path d="M0.8,9 Q4,7 7,10 Q10,7 13.2,9 A6.2,6.2 0 0 1 0.8,9 Z" fill="#ececec"/></svg>
<div class="a" style="left:1493px;top:251px;width:17px;height:14px;background:#d6d6d6"></div>
<div class="a" style="left:1501px;top:254px;width:1.6px;height:9px;background:#555"></div>
<div class="a" style="left:1200px;top:311px;width:321px;height:1px;background:#444"></div>
<svg class="a" style="left:1209px;top:285px" width="19" height="16"><ellipse cx="9.3" cy="8.3" rx="8.4" ry="5.4" fill="#e6e6e6"/><ellipse cx="9.3" cy="8.3" rx="2.6" ry="3" fill="#333"/></svg>
<svg class="a" style="left:1237px;top:285px" width="18" height="18"><rect x="1.2" y="1.2" width="14.5" height="14.5" rx="2" fill="none" stroke="#e6e6e6" stroke-width="1.5"/><path d="M5.5,8 Q9,6 11,8.5 Q13,11 13.3,14 Q9,14.5 7,13 Q4.5,10.5 5.5,8 Z" fill="#e6e6e6"/></svg>
<div class="a" style="left:1272px;top:286.5px;width:12px;height:12px;border-radius:50%;background:#cfcfcf"></div>
<div class="a" style="left:1295px;top:281px;width:24.5px;height:24.5px;background:#0a64f0;border:1px solid #bbb"></div>
<div class="t" style="left:1327px;top:283px;font-size:18.6px;color:#f2f2f2;-webkit-text-stroke:0.25px #f2f2f2;letter-spacing:-0.22px">Цветовая модель</div>
<svg class="a" style="left:1480px;top:284px" width="34" height="20"><path d="M8,3 Q3,3 3,8 Q3,14 8,14 H14 M14,14 Q18,6 20,12 Q23,6 25,11 L29,5 M29,5 L31,3 M29,12 V16" fill="none" stroke="#eee" stroke-width="1.5"/><circle cx="31" cy="3" r="1.6" fill="none" stroke="#eee" stroke-width="1"/></svg>
<div class="a" style="left:1200px;top:346px;width:321px;height:1px;background:#444"></div>
<div class="a" style="left:1295px;top:316px;width:24.5px;height:24.5px;background:#5ec8f8;border:1px solid #bbb"></div>
<div class="t" style="left:1327px;top:318px;font-size:18.6px;color:#f2f2f2;-webkit-text-stroke:0.25px #f2f2f2">Cyan</div>
<svg class="a" style="left:1489px;top:320px" width="17" height="17"><path d="M3,8.5 V6.5 Q3,1.3 8.2,1.3 Q13.4,1.3 13.4,6.5 V8.5" fill="none" stroke="#dcdcdc" stroke-width="2"/><rect x="1" y="8" width="14.5" height="8" rx="1" fill="#dcdcdc"/></svg>
<div class="a" style="left:1200px;top:381px;width:321px;height:1px;background:#444"></div>
<div class="a" style="left:1295px;top:351px;width:24.5px;height:24.5px;background:#e030d8;border:1px solid #bbb"></div>
<div class="t" style="left:1327px;top:353px;font-size:18.6px;color:#f2f2f2;-webkit-text-stroke:0.25px #f2f2f2">Магента</div>
<svg class="a" style="left:1489px;top:355px" width="17" height="17"><path d="M3,8.5 V6.5 Q3,1.3 8.2,1.3 Q13.4,1.3 13.4,6.5 V8.5" fill="none" stroke="#dcdcdc" stroke-width="2"/><rect x="1" y="8" width="14.5" height="8" rx="1" fill="#dcdcdc"/></svg>
<div class="a" style="left:1200px;top:416px;width:321px;height:1px;background:#444"></div>
<div class="a" style="left:1295px;top:386px;width:24.5px;height:24.5px;background:#e4f050;border:1px solid #bbb"></div>
<div class="t" style="left:1327px;top:388px;font-size:18.6px;color:#f2f2f2;-webkit-text-stroke:0.25px #f2f2f2">Жентый</div>
<svg class="a" style="left:1489px;top:390px" width="17" height="17"><path d="M3,8.5 V6.5 Q3,1.3 8.2,1.3 Q13.4,1.3 13.4,6.5 V8.5" fill="none" stroke="#dcdcdc" stroke-width="2"/><rect x="1" y="8" width="14.5" height="8" rx="1" fill="#dcdcdc"/></svg>
<div class="a" style="left:1200px;top:451px;width:321px;height:1px;background:#444"></div>
<div class="a" style="left:1295px;top:421px;width:24.5px;height:24.5px;background:#222222;border:1px solid #bbb"></div>
<div class="t" style="left:1327px;top:423px;font-size:18.6px;color:#f2f2f2;-webkit-text-stroke:0.25px #f2f2f2">Черный</div>
<svg class="a" style="left:1489px;top:425px" width="17" height="17"><path d="M3,8.5 V6.5 Q3,1.3 8.2,1.3 Q13.4,1.3 13.4,6.5 V8.5" fill="none" stroke="#dcdcdc" stroke-width="2"/><rect x="1" y="8" width="14.5" height="8" rx="1" fill="#dcdcdc"/></svg>
<div class="a" style="left:1261px;top:171px;width:1px;height:279px;background:#626262"></div>
<div class="a" style="left:1261px;top:205px;width:2px;height:70px;background:#e0583e"></div>
<div class="a" style="left:1261px;top:171px;width:1.5px;height:35px;background:#6a8fc8"></div>
<div class="a" style="left:1200px;top:988px;width:321px;height:1px;background:#555"></div>

<svg class="a" style="left:1208px;top:993px" width="30" height="20"><path d="M2,3 H13 M7.5,3 V15.5 H12" fill="none" stroke="#c8c8c8" stroke-width="1.5"/><path d="M12.5,16 L22,6 Q24,4.5 25.5,6 Q27,7.5 25.5,9.5 L16,18.5 L12.5,19 Z" fill="#c8c8c8"/></svg>
<div class="a" style="left:1379px;top:993px;width:17px;height:17px;background:#cfcfcf;border-radius:1px"></div>
<svg class="a" style="left:1379px;top:993px" width="17" height="17"><path d="M4,12 Q8.5,4 13,12 Z" fill="#333"/></svg>
<svg class="a" style="left:1413px;top:993px" width="20" height="17"><path d="M1,4 Q1,2 3,2 H8 L10,4 H17 Q19,4 19,6 V15 Q19,16 17,16 H3 Q1,16 1,15 Z" fill="#cfcfcf"/></svg>
<svg class="a" style="left:1447px;top:993px" width="16" height="18"><rect x="1" y="1" width="13" height="16" rx="1" fill="#cfcfcf"/><path d="M1,14 H14" stroke="#888" stroke-width="1"/></svg>
<svg class="a" style="left:1483px;top:993px" width="20" height="18"><rect x="1" y="1" width="12" height="15" fill="#cfcfcf"/><path d="M4,1 V16 M7,1 V16 M10,1 V16 M1,4.5 H13 M1,8 H13 M1,11.5 H13" stroke="#555" stroke-width="0.9"/><circle cx="17" cy="10" r="2" fill="none" stroke="#aaa" stroke-width="1"/></svg>

<!-- dieline -->
<svg class="a" style="left:0;top:0" width="1536" height="1024" viewBox="0 0 1536 1024">
 <rect x="237" y="244" width="806.5" height="668" fill="#fcfcfc" stroke="#585858" stroke-width="1.6"/>
 <g fill="none" stroke="#961e1e" stroke-width="1.35" stroke-linejoin="round">
  <!-- top tuck tab -->
  <path d="M566.3,350.6 L590,319 L590,286 Q590,275 601,275 L743,275 Q754,275 754,286 L754,319 L777.2,350.6"/>
  <path d="M639,319 L639,327 Q639,332 644,332 L701,332 Q706,332 706,327 L706,319"/>
  <!-- upper dust flaps -->
  <path d="M566.3,351 L443,351 Q432,351 432,362 L432,392 Q432,402.5 443,402.5 L505,402.5"/>
  <path d="M777.2,351 L900,351 Q911,351 911,362 L911,392 Q911,402.5 900,402.5 L840.7,402.5"/>
  <!-- side flaps upper -->
  <path d="M500,402.5 L445,415 Q433,418 433,430 L433,500 Q433,511 445,513.5 L500,524"/>
  <path d="M840.7,402.5 L917,415.5 Q931.5,418 931.5,432 L931.5,500 Q931.5,511 918,513 L840.7,525"/>
  <!-- big side flaps -->
  <path d="M500,525 L334,525 Q319.5,525 319.5,539 L319.5,679 Q319.5,693 334,693 L500,693"/>
  <path d="M840.7,525.5 L1017,525.5 Q1031,525.5 1031,539.5 L1031,679 Q1031,693 1017,693 L840.7,693"/>
  <!-- lower side flaps -->
  <path d="M500,693 L445,706 Q437,708 437,717 L437,748 Q437,757 445,758 L500,764.6"/>
  <path d="M840.7,693 L902,706.5 Q909.5,708 909.5,717 L909.5,748 Q909.5,757 902,758 L840.7,764.6"/>
  <!-- bottom panel -->
  <path d="M500,764.6 L500,799 Q500,809.3 510,809.3 L622,809.3"/>
  <path d="M840.7,764.6 L840.7,799 Q840.7,809.3 830.7,809.3 L723,809.3"/>
  <path d="M622,764.6 L622,777 Q622,782.2 627,782.2 L718,782.2 Q723,782.2 723,777 L723,764.6"/>
  <path d="M622,809.3 L622,837 Q622,847 632,847 L713,847 Q723,847 723,837 L723,809.3"/>
 </g>
 <g fill="none" stroke="#3f5283" stroke-width="1.25" stroke-dasharray="7 6">
  <path d="M590,319 L754,319"/>
  <path d="M566.3,351 L566.3,402.5 M777.2,351 L777.2,402.5"/>
  <path d="M500,402.5 L840.7,402.5"/>
  <path d="M500,402.5 L500,764.6 M840.7,402.5 L840.7,764.6"/>
  <path d="M500,526 L840.7,526"/>
  <path d="M443.6,525 L443.6,693 M899.3,525 L899.3,693"/>
  <path d="M500,693 L840.7,693"/>
  <path d="M500,751.8 L840.7,751.8"/>
  <path d="M500,764.6 L840.7,764.6"/>
  <path d="M622,782.2 L622,809.3 M723,782.2 L723,809.3"/>
  <path d="M622,809.3 L723,809.3"/>
 </g>
 <!-- dimension arrows -->
 <g stroke="#222" stroke-width="1.45" fill="none">
  <path d="M455,858.7 L889,858.7"/>
  <path d="M1054.3,534 L1054.3,688"/>
 </g>
 <g fill="#222">
  <path d="M450.5,858.7 L462,853.8 L459,858.7 L462,863.6 Z"/>
  <path d="M893.3,858.7 L882,853.8 L885,858.7 L882,863.6 Z"/>
  <path d="M1054.3,529 L1049.2,540 L1054.3,537.2 L1059.5,540 Z"/>
  <path d="M1054.3,692.3 L1049.2,681.3 L1054.3,684 L1059.5,681.3 Z"/>
 </g>
 <text x="672" y="884" font-family="Liberation Sans" font-size="25" fill="#111" stroke="#fdfdfd" stroke-width="0.3" text-anchor="middle">200 мм</text>
 <text x="1066" y="616.5" font-family="Liberation Sans" font-size="24" fill="#111" stroke="#fafafa" stroke-width="0.3">70 мм</text>
</svg>
</body></html>
